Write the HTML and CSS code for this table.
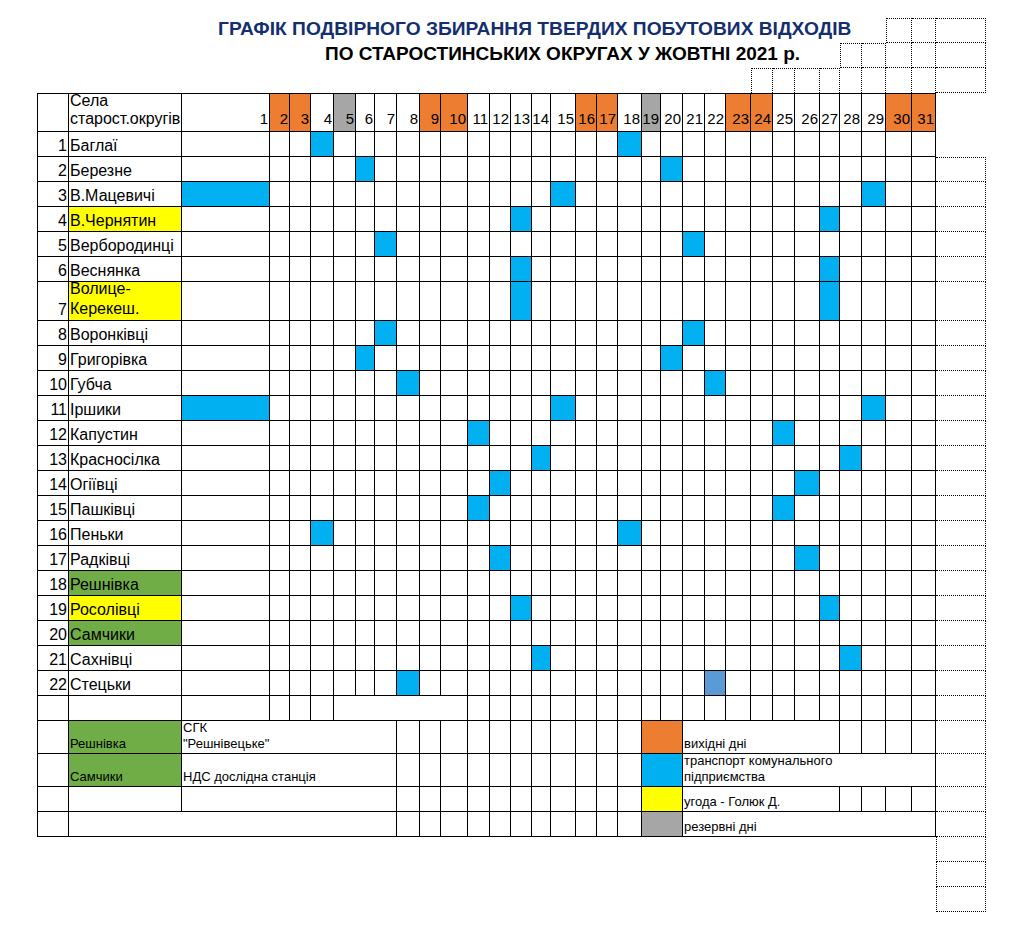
FILE: index.html
```html
<!DOCTYPE html>
<html lang="uk">
<head>
<meta charset="utf-8">
<title>Графік подвірного збирання ТПВ</title>
<link rel="stylesheet" href="styles.css">
</head>
<body>
<div class="sheet">
<div class="title"><div class="t1">ГРАФІК ПОДВІРНОГО ЗБИРАННЯ ТВЕРДИХ ПОБУТОВИХ ВІДХОДІВ</div><div class="t2">ПО СТАРОСТИНСЬКИХ ОКРУГАХ У ЖОВТНІ 2021 р.</div></div>
<!-- dotted row 1 -->
<div class="s"></div><div class="s"></div>
<div class="d dl dt"></div><div class="d dt"></div><div class="d dt"></div>
<!-- dotted row 2 -->
<div class="d dl dt"></div><div class="d dt"></div><div class="d"></div><div class="d"></div><div class="d"></div>
<!-- dotted row 3 -->
<div class="s w25"></div>
<div class="d dl dt dn"></div><div class="d dt dn"></div><div class="d dt dn"></div><div class="d dt dn"></div><div class="d dn"></div><div class="d dn"></div><div class="d dn"></div><div class="d dn"></div><div class="d"></div>
<!-- header -->
<div class="n h"></div><div class="t h">Села<br>старост.округів</div>
<div class="h k">1</div><div class="h k o">2</div><div class="h k o">3</div><div class="h k">4</div><div class="h k gy">5</div><div class="h k">6</div><div class="h k">7</div>
<div class="h k">8</div><div class="h k o">9</div><div class="h k o">10</div><div class="h k">11</div><div class="h k">12</div><div class="h k">13</div><div class="h k">14</div>
<div class="h k">15</div><div class="h k o">16</div><div class="h k o">17</div><div class="h k">18</div><div class="h k gy">19</div><div class="h k">20</div><div class="h k">21</div>
<div class="h k">22</div><div class="h k o">23</div><div class="h k o">24</div><div class="h k">25</div><div class="h k">26</div><div class="h k">27</div><div class="h k">28</div>
<div class="h k">29</div><div class="h k o">30</div><div class="h k o">31</div>
<div class="s"></div>
<!-- 1 -->
<div class="n">1</div><div class="t">Баглаї</div>
<div></div><div></div><div></div><div class="b"></div><div></div><div></div><div></div>
<div></div><div></div><div></div><div></div><div></div><div></div><div></div>
<div></div><div></div><div></div><div class="b"></div><div></div><div></div><div></div>
<div></div><div></div><div></div><div></div><div></div><div></div><div></div>
<div></div><div></div><div></div>
<div class="s"></div>
<!-- 2 -->
<div class="n">2</div><div class="t">Березне</div>
<div></div><div></div><div></div><div></div><div></div><div class="b"></div><div></div>
<div></div><div></div><div></div><div></div><div></div><div></div><div></div>
<div></div><div></div><div></div><div></div><div></div><div class="b"></div><div></div>
<div></div><div></div><div></div><div></div><div></div><div></div><div></div>
<div></div><div></div><div></div>
<div class="d dt"></div>
<!-- 3 -->
<div class="n">3</div><div class="t">В.Мацевичі</div>
<div class="b"></div><div></div><div></div><div></div><div></div><div></div><div></div>
<div></div><div></div><div></div><div></div><div></div><div></div><div></div>
<div class="b"></div><div></div><div></div><div></div><div></div><div></div><div></div>
<div></div><div></div><div></div><div></div><div></div><div></div><div></div>
<div class="b"></div><div></div><div></div>
<div class="d"></div>
<!-- 4 -->
<div class="n">4</div><div class="t y">В.Чернятин</div>
<div></div><div></div><div></div><div></div><div></div><div></div><div></div>
<div></div><div></div><div></div><div></div><div></div><div class="b"></div><div></div>
<div></div><div></div><div></div><div></div><div></div><div></div><div></div>
<div></div><div></div><div></div><div></div><div></div><div class="b"></div><div></div>
<div></div><div></div><div></div>
<div class="d"></div>
<!-- 5 -->
<div class="n">5</div><div class="t">Вербородинці</div>
<div></div><div></div><div></div><div></div><div></div><div></div><div class="b"></div>
<div></div><div></div><div></div><div></div><div></div><div></div><div></div>
<div></div><div></div><div></div><div></div><div></div><div></div><div class="b"></div>
<div></div><div></div><div></div><div></div><div></div><div></div><div></div>
<div></div><div></div><div></div>
<div class="d"></div>
<!-- 6 -->
<div class="n">6</div><div class="t">Веснянка</div>
<div></div><div></div><div></div><div></div><div></div><div></div><div></div>
<div></div><div></div><div></div><div></div><div></div><div class="b"></div><div></div>
<div></div><div></div><div></div><div></div><div></div><div></div><div></div>
<div></div><div></div><div></div><div></div><div></div><div class="b"></div><div></div>
<div></div><div></div><div></div>
<div class="d"></div>
<!-- 7 -->
<div class="n">7</div><div class="t y tall">Волице-<br>Керекеш.</div>
<div></div><div></div><div></div><div></div><div></div><div></div><div></div>
<div></div><div></div><div></div><div></div><div></div><div class="b"></div><div></div>
<div></div><div></div><div></div><div></div><div></div><div></div><div></div>
<div></div><div></div><div></div><div></div><div></div><div class="b"></div><div></div>
<div></div><div></div><div></div>
<div class="d"></div>
<!-- 8 -->
<div class="n">8</div><div class="t">Воронківці</div>
<div></div><div></div><div></div><div></div><div></div><div></div><div class="b"></div>
<div></div><div></div><div></div><div></div><div></div><div></div><div></div>
<div></div><div></div><div></div><div></div><div></div><div></div><div class="b"></div>
<div></div><div></div><div></div><div></div><div></div><div></div><div></div>
<div></div><div></div><div></div>
<div class="d"></div>
<!-- 9 -->
<div class="n">9</div><div class="t">Григорівка</div>
<div></div><div></div><div></div><div></div><div></div><div class="b"></div><div></div>
<div></div><div></div><div></div><div></div><div></div><div></div><div></div>
<div></div><div></div><div></div><div></div><div></div><div class="b"></div><div></div>
<div></div><div></div><div></div><div></div><div></div><div></div><div></div>
<div></div><div></div><div></div>
<div class="d"></div>
<!-- 10 -->
<div class="n">10</div><div class="t">Губча</div>
<div></div><div></div><div></div><div></div><div></div><div></div><div></div>
<div class="b"></div><div></div><div></div><div></div><div></div><div></div><div></div>
<div></div><div></div><div></div><div></div><div></div><div></div><div></div>
<div class="b"></div><div></div><div></div><div></div><div></div><div></div><div></div>
<div></div><div></div><div></div>
<div class="d"></div>
<!-- 11 -->
<div class="n">11</div><div class="t">Іршики</div>
<div class="b"></div><div></div><div></div><div></div><div></div><div></div><div></div>
<div></div><div></div><div></div><div></div><div></div><div></div><div></div>
<div class="b"></div><div></div><div></div><div></div><div></div><div></div><div></div>
<div></div><div></div><div></div><div></div><div></div><div></div><div></div>
<div class="b"></div><div></div><div></div>
<div class="d"></div>
<!-- 12 -->
<div class="n">12</div><div class="t">Капустин</div>
<div></div><div></div><div></div><div></div><div></div><div></div><div></div>
<div></div><div></div><div></div><div class="b"></div><div></div><div></div><div></div>
<div></div><div></div><div></div><div></div><div></div><div></div><div></div>
<div></div><div></div><div></div><div class="b"></div><div></div><div></div><div></div>
<div></div><div></div><div></div>
<div class="d"></div>
<!-- 13 -->
<div class="n">13</div><div class="t">Красносілка</div>
<div></div><div></div><div></div><div></div><div></div><div></div><div></div>
<div></div><div></div><div></div><div></div><div></div><div></div><div class="b"></div>
<div></div><div></div><div></div><div></div><div></div><div></div><div></div>
<div></div><div></div><div></div><div></div><div></div><div></div><div class="b"></div>
<div></div><div></div><div></div>
<div class="d"></div>
<!-- 14 -->
<div class="n">14</div><div class="t">Огіївці</div>
<div></div><div></div><div></div><div></div><div></div><div></div><div></div>
<div></div><div></div><div></div><div></div><div class="b"></div><div></div><div></div>
<div></div><div></div><div></div><div></div><div></div><div></div><div></div>
<div></div><div></div><div></div><div></div><div class="b"></div><div></div><div></div>
<div></div><div></div><div></div>
<div class="d"></div>
<!-- 15 -->
<div class="n">15</div><div class="t">Пашківці</div>
<div></div><div></div><div></div><div></div><div></div><div></div><div></div>
<div></div><div></div><div></div><div class="b"></div><div></div><div></div><div></div>
<div></div><div></div><div></div><div></div><div></div><div></div><div></div>
<div></div><div></div><div></div><div class="b"></div><div></div><div></div><div></div>
<div></div><div></div><div></div>
<div class="d"></div>
<!-- 16 -->
<div class="n">16</div><div class="t">Пеньки</div>
<div></div><div></div><div></div><div class="b"></div><div></div><div></div><div></div>
<div></div><div></div><div></div><div></div><div></div><div></div><div></div>
<div></div><div></div><div></div><div class="b"></div><div></div><div></div><div></div>
<div></div><div></div><div></div><div></div><div></div><div></div><div></div>
<div></div><div></div><div></div>
<div class="d"></div>
<!-- 17 -->
<div class="n">17</div><div class="t">Радківці</div>
<div></div><div></div><div></div><div></div><div></div><div></div><div></div>
<div></div><div></div><div></div><div></div><div class="b"></div><div></div><div></div>
<div></div><div></div><div></div><div></div><div></div><div></div><div></div>
<div></div><div></div><div></div><div></div><div class="b"></div><div></div><div></div>
<div></div><div></div><div></div>
<div class="d"></div>
<!-- 18 -->
<div class="n">18</div><div class="t g">Решнівка</div>
<div></div><div></div><div></div><div></div><div></div><div></div><div></div>
<div></div><div></div><div></div><div></div><div></div><div></div><div></div>
<div></div><div></div><div></div><div></div><div></div><div></div><div></div>
<div></div><div></div><div></div><div></div><div></div><div></div><div></div>
<div></div><div></div><div></div>
<div class="d"></div>
<!-- 19 -->
<div class="n">19</div><div class="t y">Росолівці</div>
<div></div><div></div><div></div><div></div><div></div><div></div><div></div>
<div></div><div></div><div></div><div></div><div></div><div class="b"></div><div></div>
<div></div><div></div><div></div><div></div><div></div><div></div><div></div>
<div></div><div></div><div></div><div></div><div></div><div class="b"></div><div></div>
<div></div><div></div><div></div>
<div class="d"></div>
<!-- 20 -->
<div class="n">20</div><div class="t g">Самчики</div>
<div></div><div></div><div></div><div></div><div></div><div></div><div></div>
<div></div><div></div><div></div><div></div><div></div><div></div><div></div>
<div></div><div></div><div></div><div></div><div></div><div></div><div></div>
<div></div><div></div><div></div><div></div><div></div><div></div><div></div>
<div></div><div></div><div></div>
<div class="d"></div>
<!-- 21 -->
<div class="n">21</div><div class="t">Сахнівці</div>
<div></div><div></div><div></div><div></div><div></div><div></div><div></div>
<div></div><div></div><div></div><div></div><div></div><div></div><div class="b"></div>
<div></div><div></div><div></div><div></div><div></div><div></div><div></div>
<div></div><div></div><div></div><div></div><div></div><div></div><div class="b"></div>
<div></div><div></div><div></div>
<div class="d"></div>
<!-- 22 -->
<div class="n">22</div><div class="t">Стецьки</div>
<div></div><div></div><div></div><div></div><div></div><div></div><div></div>
<div class="b"></div><div></div><div></div><div></div><div></div><div></div><div></div>
<div></div><div></div><div></div><div></div><div></div><div></div><div></div>
<div class="b2"></div><div></div><div></div><div></div><div></div><div></div><div></div>
<div></div><div></div><div></div>
<div class="d"></div>
<!-- blank row -->
<div class="n"></div><div class="t"></div>
<div></div><div></div><div></div><div></div><div class="w6"></div>
<div></div><div></div><div></div><div></div><div></div><div></div><div></div>
<div></div><div></div><div></div><div></div><div></div><div></div><div></div>
<div></div><div></div><div></div><div></div><div></div><div></div><div></div>
<div class="d"></div>
<!-- legend 1 -->
<div class="n"></div><div class="t g lg">Решнівка</div><div class="w7 lg">СГК<br>"Решнівецьке"</div>
<div></div><div></div><div></div><div></div><div></div><div></div><div></div><div></div><div></div><div></div><div></div>
<div class="w2 o"></div><div class="w7 lg">вихідні дні</div>
<div></div><div></div><div></div><div></div>
<div class="d"></div>
<!-- legend 2 -->
<div class="n"></div><div class="t g lg">Самчики</div><div class="w7 lg">НДС дослідна станція</div>
<div></div><div></div><div></div><div></div><div></div><div></div><div></div><div></div><div></div><div></div><div></div>
<div class="w2 b"></div><div class="w11 lg">транспорт комунального<br>підприємства</div>
<div class="d"></div>
<!-- legend 3 -->
<div class="n"></div><div class="t"></div><div class="w7"></div>
<div></div><div></div><div></div><div></div><div></div><div></div><div></div><div></div><div></div><div></div><div></div>
<div class="w2 y"></div><div class="w7 lg">угода - Голюк Д.</div>
<div></div><div></div><div></div><div></div>
<div class="d"></div>
<!-- legend 4 -->
<div class="n"></div><div class="w8"></div>
<div></div><div></div><div></div><div></div><div></div><div></div><div></div><div></div><div></div><div></div><div></div>
<div class="w2 gy"></div><div class="w11 lg">резервні дні</div>
<div class="d"></div>
<!-- dotted rows below -->
<div class="s w33"></div><div class="d dl"></div>
<div class="s w33"></div><div class="d dl"></div>
<div class="s w33"></div><div class="d dl"></div>
</div>
</body>
</html>
```

FILE: styles.css
```css
html, body {
  margin: 0;
  background: #ffffff;
}

body {
  font-family: "Liberation Sans", Arial, Helvetica, sans-serif;
  color: #000000;
}

.sheet {
  display: grid;
  margin: 18px 0 0 37px;
  width: 949px;
  font-size: 16px;
  line-height: 18px;
  grid-template-columns:
    32px 113px 88px 20px 21px 23px 22px 19px 22px 23px 21px 27px 22px 21px 21px 19px
    25px 21px 21px 24px 19px 22px 22px 21px 25px 22px 22px 25px 20px 22px 24px 26px 24px 50px;
  grid-template-rows:
    25px 25px 25px 39px repeat(6, 25px) 39px repeat(15, 25px) 25px 33px 33px 25px 25px 25px 25px 25px;
}

.sheet > div {
  box-sizing: border-box;
  min-width: 0;
  display: flex;
  align-items: flex-end;
  white-space: nowrap;
  padding-bottom: 1px;
  border-right: 1px solid #000;
  border-bottom: 1px solid #000;
}

/* title */
.sheet > .title {
  grid-row: 1 / 3;
  grid-column: 1 / 30;
  display: block;
  border: 0;
  padding: 0;
  font-weight: bold;
  font-size: 19px;
  line-height: 22px;
}

.t1 {
  height: 25px;
  padding-left: 181px;
  font-size: 19.2px;
  color: #142f6e;
}

.t2 {
  height: 25px;
  padding-left: 288px;
  color: #000;
}

/* spacers and dotted helper cells */
.sheet > .s {
  border: 0;
}

.sheet > .d {
  border-right: 1px dotted #000;
  border-bottom: 1px dotted #000;
}

.sheet > .dl {
  border-left: 1px dotted #000;
}

.sheet > .dt {
  border-top: 1px dotted #000;
}

.sheet > .dn {
  border-bottom: 0;
}

/* table cells */
.sheet > .n {
  border-left: 1px solid #000;
  justify-content: flex-end;
  padding-right: 1px;
}

.sheet > .t {
  padding-left: 1px;
}

.sheet > .h {
  border-top: 1px solid #000;
  padding-bottom: 3px;
}

.sheet > .k {
  justify-content: flex-end;
  font-size: 15px;
  padding-right: 1px;
}

.sheet > .tall {
  line-height: 20px;
}

.sheet > .lg {
  font-size: 13px;
  line-height: 16px;
  padding-left: 1px;
}

/* spans */
.w2 { grid-column: span 2; }
.w6 { grid-column: span 6; }
.w7 { grid-column: span 7; }
.w8 { grid-column: span 8; }
.w11 { grid-column: span 11; }
.w25 { grid-column: span 25; }
.w33 { grid-column: span 33; }

/* fills */
.b { background: #00b0f0; }
.b2 { background: #5b9bd5; }
.o { background: #ed7d31; }
.y { background: #ffff00; }
.g { background: #70ad47; }
.gy { background: #a6a6a6; }
```
